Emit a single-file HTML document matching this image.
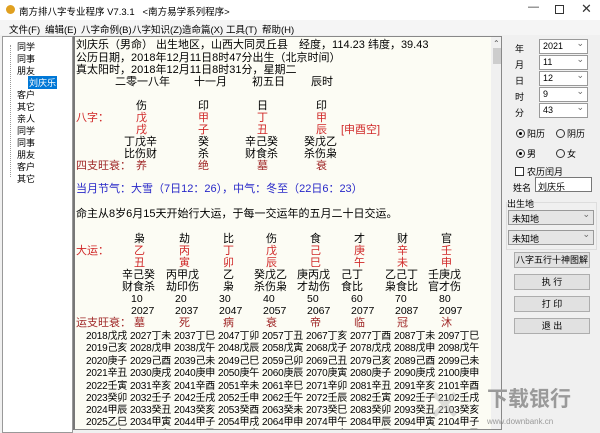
<!DOCTYPE html>
<html><head><meta charset="utf-8"><style>
*{margin:0;padding:0;box-sizing:border-box}
body{width:600px;height:433px;overflow:hidden;background:#f0f0f0;font-family:"Liberation Sans","Noto Sans CJK SC",sans-serif;font-size:11px;color:#000;position:relative}
.a{position:absolute;white-space:nowrap}
#title{left:0;top:0;width:600px;height:20px;background:#fff}
#menu{left:0;top:20px;width:600px;height:15px;background:#f5f5f5;font-size:9.5px}
#menu span{position:absolute;top:2px}
#tree{left:2px;top:36px;width:71px;height:397px;background:#fff;border:1px solid #999;font-size:9px}
#tree div{position:absolute;left:14px}
#txt{left:73px;top:36px;width:429px;height:394px;background:#fcfcf4;border:1px solid #888;border-left:2px solid #777;font-family:"Liberation Sans","Noto Sans CJK SC",sans-serif;font-size:11px;overflow:hidden}
#txt .a{line-height:12px}
.r{color:#d02828}.d{color:#a02828}.b{color:#2828c8}
.y span{display:inline-block;width:44px;font-size:10px;letter-spacing:-.2px}
.c span{position:absolute}
.rp{font-size:9px}
.cb{position:absolute;background:#fff;border:1px solid #999;height:15px;font-size:9px;padding:1px 3px}
.cb:after{content:"⌄";position:absolute;right:3px;top:-2px;color:#666}
.btn{position:absolute;left:514px;width:76px;height:16px;background:#e1e1e1;border:1px solid #adadad;text-align:center;font-size:9px;line-height:14px}
.rad{display:inline-block;width:9px;height:9px;border:1px solid #333;border-radius:50%;vertical-align:-1px;margin-right:2px;position:relative}
.rad.on:after{content:"";position:absolute;left:2px;top:2px;width:3px;height:3px;background:#000;border-radius:50%}
</style></head><body>
<div id="title" class="a">
 <div class="a" style="left:6px;top:5px;width:9px;height:9px;border-radius:50%;background:#e0a020"></div>
 <div class="a" style="left:19px;top:4px;font-size:9.5px">南方排八字专业程序 V7.3.1 &nbsp;&nbsp;&lt;南方易学系列程序&gt;</div>
 <div class="a" style="left:528px;top:1px;font-size:11px;color:#333">—</div>
 <div class="a" style="left:555px;top:5px;width:9px;height:9px;border:1px solid #333"></div>
 <div class="a" style="left:581px;top:1px;font-size:13px;color:#333">✕</div>
</div>
<div id="menu" class="a">
 <span style="left:9px">文件(F)</span><span style="left:45px">编辑(E)</span><span style="left:81px">八字命例(B)</span><span style="left:132px">八字知识(Z)</span><span style="left:182px">造命篇(X)</span><span style="left:226px">工具(T)</span><span style="left:262px">帮助(H)</span>
</div>
<div id="tree" class="a">
 <div style="top:3px">同学</div><div style="top:15px">同事</div><div style="top:27px">朋友</div>
 <div style="top:39px;left:25px;background:#0078d7;color:#fff;padding:0 1px">刘庆乐</div>
 <div style="top:51px">客户</div><div style="top:63px">其它</div><div style="top:75px">亲人</div><div style="top:87px">同学</div><div style="top:99px">同事</div><div style="top:111px">朋友</div><div style="top:123px">客户</div><div style="top:135px">其它</div>
 <div style="left:7px;top:8px;width:1px;height:132px;border-left:1px dotted #999"></div>
</div>
<div id="txt" class="a">
 <div class="a" style="left:1px;top:2px">刘庆乐（男命） 出生地区，山西大同灵丘县　经度，114.23 纬度，39.43</div>
 <div class="a" style="left:1px;top:15px">公历日期，2018年12月11日8时47分出生（北京时间）</div>
 <div class="a" style="left:1px;top:27px">真太阳时，2018年12月11日8时31分，星期二</div>
 <div class="a c" style="left:0;top:39px;width:420px;height:12px"><span style="left:40px">二零一八年</span><span style="left:119px">十一月</span><span style="left:177px">初五日</span><span style="left:236px">辰时</span></div>
 <div class="a c" style="left:0;top:63px;width:420px;height:12px"><span style="left:61px">伤</span><span style="left:123px">印</span><span style="left:182px">日</span><span style="left:241px">印</span></div>
 <div class="a c r" style="left:0;top:75px;width:420px;height:12px"><span style="left:1px">八字：</span><span style="left:61px">戊</span><span style="left:123px">甲</span><span style="left:182px">丁</span><span style="left:241px">甲</span></div>
 <div class="a c r" style="left:0;top:87px;width:420px;height:12px"><span style="left:61px">戌</span><span style="left:123px">子</span><span style="left:182px">丑</span><span style="left:241px">辰</span><span style="left:266px">[申酉空]</span></div>
 <div class="a c" style="left:0;top:99px;width:420px;height:12px"><span style="left:49px">丁戊辛</span><span style="left:123px">癸</span><span style="left:170px">辛己癸</span><span style="left:229px">癸戊乙</span></div>
 <div class="a c" style="left:0;top:111px;width:420px;height:12px"><span style="left:49px">比伤财</span><span style="left:123px">杀</span><span style="left:170px">财食杀</span><span style="left:229px">杀伤枭</span></div>
 <div class="a c d" style="left:0;top:123px;width:420px;height:12px"><span style="left:1px">四支旺衰：</span><span style="left:61px">养</span><span style="left:123px">绝</span><span style="left:182px">墓</span><span style="left:241px">衰</span></div>
 <div class="a b" style="left:1px;top:146px">当月节气：大雪（7日12：26），中气：冬至（22日6：23）</div>
 <div class="a" style="left:1px;top:171px">命主从8岁6月15天开始行大运，于每一交运年的五月二十日交运。</div>
 <div class="a c" style="left:0;top:196px;width:420px;height:12px"><span style="left:59px">枭</span><span style="left:104px">劫</span><span style="left:148px">比</span><span style="left:191px">伤</span><span style="left:235px">食</span><span style="left:279px">才</span><span style="left:322px">财</span><span style="left:366px">官</span></div>
 <div class="a c r" style="left:0;top:208px;width:420px;height:12px"><span style="left:1px">大运：</span><span style="left:59px">乙</span><span style="left:104px">丙</span><span style="left:148px">丁</span><span style="left:191px">戊</span><span style="left:235px">己</span><span style="left:279px">庚</span><span style="left:322px">辛</span><span style="left:366px">壬</span></div>
 <div class="a c r" style="left:0;top:220px;width:420px;height:12px"><span style="left:59px">丑</span><span style="left:104px">寅</span><span style="left:148px">卯</span><span style="left:191px">辰</span><span style="left:235px">巳</span><span style="left:279px">午</span><span style="left:322px">未</span><span style="left:366px">申</span></div>
 <div class="a c" style="left:0;top:232px;width:420px;height:12px"><span style="left:47px">辛己癸</span><span style="left:91px">丙甲戊</span><span style="left:148px">乙</span><span style="left:179px">癸戊乙</span><span style="left:222px">庚丙戊</span><span style="left:266px">己丁</span><span style="left:310px">乙己丁</span><span style="left:353px">壬庚戊</span></div>
 <div class="a c" style="left:0;top:244px;width:420px;height:12px"><span style="left:47px">财食杀</span><span style="left:91px">劫印伤</span><span style="left:148px">枭</span><span style="left:179px">杀伤枭</span><span style="left:222px">才劫伤</span><span style="left:266px">食比</span><span style="left:310px">枭食比</span><span style="left:353px">官才伤</span></div>
 <div class="a c" style="left:0;top:256px;width:420px;height:12px;font-size:10.5px"><span style="left:56px">10</span><span style="left:100px">20</span><span style="left:144px">30</span><span style="left:188px">40</span><span style="left:232px">50</span><span style="left:276px">60</span><span style="left:320px">70</span><span style="left:364px">80</span></div>
 <div class="a c" style="left:0;top:268px;width:420px;height:12px;font-size:10.5px"><span style="left:56px">2027</span><span style="left:100px">2037</span><span style="left:144px">2047</span><span style="left:188px">2057</span><span style="left:232px">2067</span><span style="left:276px">2077</span><span style="left:320px">2087</span><span style="left:364px">2097</span></div>
 <div class="a c d" style="left:0;top:280px;width:420px;height:12px"><span style="left:1px">运支旺衰：</span><span style="left:59px">墓</span><span style="left:104px">死</span><span style="left:148px">病</span><span style="left:191px">衰</span><span style="left:235px">帝</span><span style="left:279px">临</span><span style="left:322px">冠</span><span style="left:366px">沐</span></div>
 <div class="a y" style="left:11px;top:293px"><span>2018戊戌</span><span>2027丁未</span><span>2037丁巳</span><span>2047丁卯</span><span>2057丁丑</span><span>2067丁亥</span><span>2077丁酉</span><span>2087丁未</span><span>2097丁巳</span></div>
 <div class="a y" style="left:11px;top:305px"><span>2019己亥</span><span>2028戊申</span><span>2038戊午</span><span>2048戊辰</span><span>2058戊寅</span><span>2068戊子</span><span>2078戊戌</span><span>2088戊申</span><span>2098戊午</span></div>
 <div class="a y" style="left:11px;top:318px"><span>2020庚子</span><span>2029己酉</span><span>2039己未</span><span>2049己巳</span><span>2059己卯</span><span>2069己丑</span><span>2079己亥</span><span>2089己酉</span><span>2099己未</span></div>
 <div class="a y" style="left:11px;top:330px"><span>2021辛丑</span><span>2030庚戌</span><span>2040庚申</span><span>2050庚午</span><span>2060庚辰</span><span>2070庚寅</span><span>2080庚子</span><span>2090庚戌</span><span>2100庚申</span></div>
 <div class="a y" style="left:11px;top:343px"><span>2022壬寅</span><span>2031辛亥</span><span>2041辛酉</span><span>2051辛未</span><span>2061辛巳</span><span>2071辛卯</span><span>2081辛丑</span><span>2091辛亥</span><span>2101辛酉</span></div>
 <div class="a y" style="left:11px;top:355px"><span>2023癸卯</span><span>2032壬子</span><span>2042壬戌</span><span>2052壬申</span><span>2062壬午</span><span>2072壬辰</span><span>2082壬寅</span><span>2092壬子</span><span>2102壬戌</span></div>
 <div class="a y" style="left:11px;top:367px"><span>2024甲辰</span><span>2033癸丑</span><span>2043癸亥</span><span>2053癸酉</span><span>2063癸未</span><span>2073癸巳</span><span>2083癸卯</span><span>2093癸丑</span><span>2103癸亥</span></div>
 <div class="a y" style="left:11px;top:379px"><span>2025乙巳</span><span>2034甲寅</span><span>2044甲子</span><span>2054甲戌</span><span>2064甲申</span><span>2074甲午</span><span>2084甲辰</span><span>2094甲寅</span><span>2104甲子</span></div>
 <div class="a y" style="left:11px;top:391px"><span>2026丙午</span><span>2035乙卯</span><span>2045乙丑</span><span>2055乙亥</span><span>2065乙酉</span><span>2075乙未</span><span>2085乙巳</span><span>2095乙卯</span><span>2105乙丑</span></div>
 <div class="a" style="left:416px;top:0;width:11px;height:392px;background:#f0f0f0"></div>
 <div class="a" style="left:418px;top:11px;width:8px;height:16px;background:#cdcdcd"></div>
 <div class="a" style="left:418px;top:1px;font-size:8px;color:#555">⌃</div>
</div>
<div class="a" style="left:418px;top:384px;width:60px;height:45px;opacity:.45">
 <div class="a" style="left:10px;top:2px;font-size:40px;color:#bbb;font-weight:bold;line-height:40px">✕</div>
</div>
<div class="a" style="left:487px;top:386px;font-size:21px;color:#9a9a9a;font-weight:bold;font-family:'Noto Sans CJK SC',sans-serif;line-height:24px">下载银行</div>
<div class="a" style="left:487px;top:417px;font-size:8px;color:#9a9a9a">www.downbank.cn</div>

<div class="a rp" style="left:515px;top:41px;line-height:16px">年<br>月<br>日<br>时<br>分</div>
<div class="cb" style="left:539px;top:39px;width:49px">2021</div>
<div class="cb" style="left:539px;top:55px;width:49px">11</div>
<div class="cb" style="left:539px;top:71px;width:49px">12</div>
<div class="cb" style="left:539px;top:87px;width:49px">9</div>
<div class="cb" style="left:539px;top:103px;width:49px">43</div>
<div class="a rp" style="left:516px;top:127px"><span class="rad on"></span>阳历</div>
<div class="a rp" style="left:556px;top:127px"><span class="rad"></span>阴历</div>
<div class="a rp" style="left:516px;top:147px"><span class="rad on"></span>男</div>
<div class="a rp" style="left:556px;top:147px"><span class="rad"></span>女</div>
<div class="a rp" style="left:515px;top:165px"><span style="display:inline-block;width:9px;height:9px;border:1px solid #333;background:#fff;vertical-align:-1px;margin-right:3px"></span>农历闰月</div>
<div class="a rp" style="left:513px;top:181px">姓名</div>
<div class="a rp" style="left:535px;top:177px;width:57px;height:15px;background:#fff;border:1px solid #777;padding:2px">刘庆乐</div>
<div class="a" style="left:506px;top:202px;width:91px;height:48px;border:1px solid #ddd"></div>
<div class="a rp" style="left:507px;top:197px;background:#f0f0f0">出生地</div>
<div class="cb" style="left:508px;top:210px;width:86px;background:#e5e5e5">未知地</div>
<div class="cb" style="left:508px;top:230px;width:86px;background:#e5e5e5">未知地</div>
<div class="btn" style="top:252px">八字五行十神图解</div>
<div class="btn" style="top:274px">执 行</div>
<div class="btn" style="top:296px">打 印</div>
<div class="btn" style="top:318px">退 出</div>
</body></html>
